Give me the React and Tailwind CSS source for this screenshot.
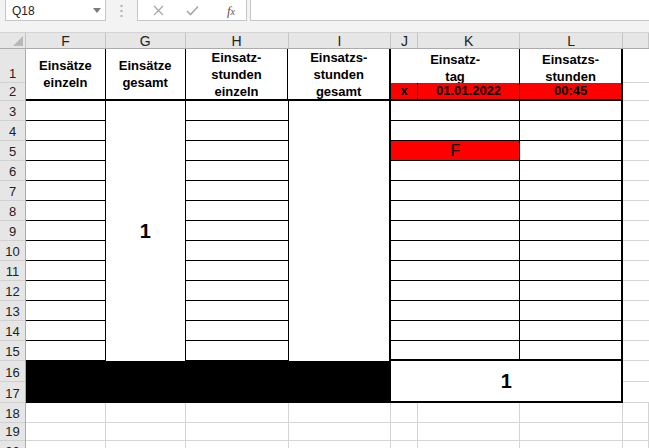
import React from "react";

const GRID = "border-[#d4d4d4]";

const rowHeads = [
  { n: 1, h: "h-[34px]" },
  { n: 2, h: "h-[18px]" },
  { n: 3, h: "h-[20px]" },
  { n: 4, h: "h-[20px]" },
  { n: 5, h: "h-[20px]" },
  { n: 6, h: "h-[20px]" },
  { n: 7, h: "h-[20px]" },
  { n: 8, h: "h-[20px]" },
  { n: 9, h: "h-[20px]" },
  { n: 10, h: "h-[20px]" },
  { n: 11, h: "h-[20px]" },
  { n: 12, h: "h-[20px]" },
  { n: 13, h: "h-[20px]" },
  { n: 14, h: "h-[20px]" },
  { n: 15, h: "h-[20px]" },
  { n: 16, h: "h-[21px]" },
  { n: 17, h: "h-[21px]" },
  { n: 18, h: "h-[20px]" },
  { n: 19, h: "h-[18px]" },
  { n: 20, h: "h-[20px]" },
];

const cols = [
  { l: "F", w: "w-[80px]" },
  { l: "G", w: "w-[80px]" },
  { l: "H", w: "w-[103px]" },
  { l: "I", w: "w-[103px]" },
  { l: "J", w: "w-[27px]" },
  { l: "K", w: "w-[102px]" },
  { l: "L", w: "w-[103px]" },
  { l: "", w: "w-[26px]" },
];

const body = Array.from({ length: 13 }, (_, i) => i + 3);

function TopBar() {
  return (
    <div className="h-[32px] bg-[#f3f3f3] flex items-start pl-[5px]">
      <div className="w-[101px] h-[22px] -mt-[1px] bg-white border border-[#c6c6c6] flex items-center justify-between pl-[6px] pr-[4px]">
        <span className="text-[12px] text-[#222] leading-none mt-[1px]">Q18</span>
        <svg width="8" height="5" viewBox="0 0 8 5">
          <path d="M0 0H8L4 5Z" fill="#7a7a7a" />
        </svg>
      </div>
      <div className="w-[31px] h-[21px] flex items-center justify-center">
        <svg width="3" height="12" viewBox="0 0 3 12">
          <rect x="0.5" y="0" width="2" height="2" fill="#b0b0b0" />
          <rect x="0.5" y="5" width="2" height="2" fill="#b0b0b0" />
          <rect x="0.5" y="10" width="2" height="2" fill="#b0b0b0" />
        </svg>
      </div>
      <div className="w-[110px] h-[22px] -mt-[1px] bg-white border border-[#c6c6c6] flex items-center">
        <div className="w-[40px] flex justify-center">
          <svg width="11" height="11" viewBox="0 0 11 11">
            <path d="M1 1L10 10M10 1L1 10" stroke="#a6a6a6" strokeWidth="1.2" fill="none" />
          </svg>
        </div>
        <div className="w-[28px] flex justify-center">
          <svg width="13" height="11" viewBox="0 0 13 11">
            <path d="M1 6L4.5 9.5L12 1.5" stroke="#a6a6a6" strokeWidth="1.6" fill="none" />
          </svg>
        </div>
        <div className="flex-1 flex justify-center pl-[10px]">
          <span className="font-['Liberation_Serif',serif] italic text-[13px] text-[#555] leading-none">
            f<span className="text-[10px]">x</span>
          </span>
        </div>
      </div>
      <div className="ml-[3px] flex-1 h-[22px] -mt-[1px] bg-white border border-[#c6c6c6] border-r-0" />
    </div>
  );
}

function ColHeader() {
  return (
    <div className="h-[17px] flex bg-[#e6e6e6] border-t border-b border-t-[#d4d4d4] border-b-[#ababab]">
      <div className="w-[26px] h-full border-r border-[#c6c6c6] relative">
        <svg className="absolute right-[2px] bottom-[2px]" width="10" height="10" viewBox="0 0 10 10">
          <path d="M10 0V10H0Z" fill="#b8b8b8" />
        </svg>
      </div>
      {cols.map((c, i) => (
        <div
          key={i}
          className={`${c.w} h-full border-r border-[#c6c6c6] flex items-center justify-center text-[14px] leading-none text-[#222]`}
        >
          {c.l}
        </div>
      ))}
    </div>
  );
}

function RowHeaders() {
  return (
    <div className="w-[26px] flex flex-col bg-[#e6e6e6] border-r border-[#ababab]">
      {rowHeads.map((r) => (
        <div
          key={r.n}
          className={`${r.h} border-b border-[#d0d0d0] flex items-end justify-center pb-[1px] text-[13px] leading-[15px] text-[#222]`}
        >
          {r.n}
        </div>
      ))}
    </div>
  );
}

function Lines({ items }) {
  return (
    <div className="flex flex-col items-center">
      {items.map((t) => (
        <span key={t}>{t}</span>
      ))}
    </div>
  );
}

function HeadCell({ w, items, thick }) {
  return (
    <div
      className={`${w} h-full border-b-2 border-black ${
        thick ? "border-r-2" : "border-r"
      } flex items-center justify-center font-bold text-[13px] leading-[17px]`}
    >
      <Lines items={items} />
    </div>
  );
}

function Sheet() {
  return (
    <div className="w-[623px] flex flex-col">
      {/* rows 1-2 */}
      <div className="h-[52px] flex">
        <HeadCell w="w-[80px]" items={["Einsätze", "einzeln"]} />
        <HeadCell w="w-[80px]" items={["Einsätze", "gesamt"]} />
        <HeadCell w="w-[103px]" items={["Einsatz-", "stunden", "einzeln"]} />
        <HeadCell w="w-[103px]" items={["Einsatzs-", "stunden", "gesamt"]} thick />
        <div className="w-[232px] flex flex-col">
          <div className="h-[34px] flex font-bold text-[13px] leading-[17px]">
            <div className="w-[129px] border-r border-black flex items-center justify-center pt-[3px]">
              <Lines items={["Einsatz-", "tag"]} />
            </div>
            <div className="w-[103px] border-r-2 border-black flex items-center justify-center pt-[3px]">
              <Lines items={["Einsatzs-", "stunden"]} />
            </div>
          </div>
          <div className="h-[18px] flex bg-[#ff0000] font-bold text-[13px] leading-[16px]">
            <div className="w-[27px] border-r border-b-2 border-black flex items-center justify-center">x</div>
            <div className="w-[102px] border-r border-b-2 border-black flex items-center justify-center">01.01.2022</div>
            <div className="w-[103px] border-r-2 border-b-2 border-black flex items-center justify-center">00:45</div>
          </div>
        </div>
        <div className="w-[26px] flex flex-col">
          <div className={`h-[34px] border-b ${GRID}`} />
          <div className={`h-[18px] border-b ${GRID}`} />
        </div>
      </div>

      {/* rows 3-15 */}
      <div className="h-[260px] flex">
        <div className="w-[80px] flex flex-col">
          {body.map((r) => (
            <div key={r} className="h-[20px] border-r border-b border-black" />
          ))}
        </div>
        <div className="w-[80px] border-r border-black flex items-center justify-center font-bold text-[20px] leading-none">
          1
        </div>
        <div className="w-[103px] flex flex-col">
          {body.map((r) => (
            <div key={r} className="h-[20px] border-r border-b border-black" />
          ))}
        </div>
        <div className="w-[103px] border-r-2 border-black" />
        <div className="w-[129px] flex flex-col">
          {body.map((r) => (
            <div
              key={r}
              className={`h-[20px] border-r border-black flex items-center justify-center text-[16px] leading-none ${
                r === 15 ? "border-b-2" : "border-b"
              } ${r === 5 ? "bg-[#ff0000]" : ""}`}
            >
              {r === 5 ? "F" : ""}
            </div>
          ))}
        </div>
        <div className="w-[103px] flex flex-col">
          {body.map((r) => (
            <div
              key={r}
              className={`h-[20px] border-r-2 border-black ${r === 15 ? "border-b-2" : "border-b"}`}
            />
          ))}
        </div>
        <div className="w-[26px] flex flex-col">
          {body.map((r) => (
            <div key={r} className={`h-[20px] border-b ${GRID}`} />
          ))}
        </div>
      </div>

      {/* rows 16-17 */}
      <div className="h-[42px] flex">
        <div className="w-[366px] bg-black" />
        <div className="w-[232px] border-r-2 border-b-2 border-black flex items-center justify-center font-bold text-[20px] leading-none">
          1
        </div>
        <div className="w-[26px] flex flex-col">
          <div className={`h-[21px] border-b ${GRID}`} />
          <div className={`h-[21px] border-b ${GRID}`} />
        </div>
      </div>

      {/* rows 18-20 */}
      {["h-[20px]", "h-[18px]", "h-[20px]"].map((h, ri) => (
        <div key={ri} className={`${h} flex`}>
          {cols.map((c, i) => (
            <div key={i} className={`${c.w} h-full border-r border-b ${GRID}`} />
          ))}
        </div>
      ))}
    </div>
  );
}

export default function App() {
  return (
    <div className="w-[649px] h-[448px] overflow-hidden bg-white font-['Liberation_Sans',Arial,sans-serif] text-black">
      <TopBar />
      <ColHeader />
      <div className="flex">
        <RowHeaders />
        <Sheet />
      </div>
    </div>
  );
}
